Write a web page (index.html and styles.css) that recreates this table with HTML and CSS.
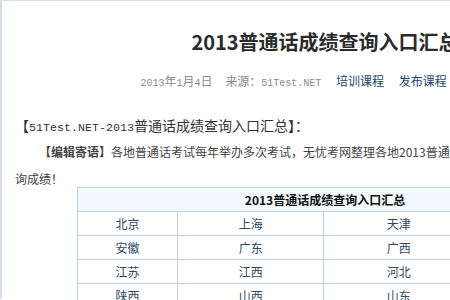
FILE: index.html
```html
<!DOCTYPE html>
<html lang="zh-CN">
<head>
<meta charset="utf-8">
<title>2013普通话成绩查询入口汇总</title>
<link rel="stylesheet" href="styles.css">
</head>
<body>
<div class="page">
  <div class="content">
    <h1 class="title">2013普通话成绩查询入口汇总</h1>
    <div class="meta">
      <span class="date"><span class="en">2013</span>年<span class="en">1</span>月<span class="en">4</span>日</span>
      <span class="source">来源：<span class="en">51Test.NET</span></span>
      <a class="link" href="#">培训课程</a>
      <a class="link" href="#">发布课程</a>
      <a class="link" href="#">在线咨询</a>
    </div>
    <p class="lead">【<span class="en lead-en">51Test.NET-2013</span>普通话成绩查询入口汇总】：</p>
    <p class="intro"><b class="tag">【编辑寄语】</b>各地普通话考试每年举办多次考试，无忧考网整理各地2013普通话成绩查询入口汇总，方便考生查询成绩！</p>
    <table class="grid">
      <colgroup>
        <col class="c1"><col class="c2"><col class="c3"><col class="c4">
      </colgroup>
      <tr><th colspan="4">2013普通话成绩查询入口汇总</th></tr>
      <tr><td>北京</td><td>上海</td><td>天津</td><td>重庆</td></tr>
      <tr><td>安徽</td><td>广东</td><td>广西</td><td>福建</td></tr>
      <tr><td>江苏</td><td>江西</td><td>河北</td><td>河南</td></tr>
      <tr><td>陕西</td><td>山西</td><td>山东</td><td>湖北</td></tr>
    </table>
  </div>
</div>
</body>
</html>
```
FILE: styles.css
```css
html, body {
  margin: 0;
  padding: 0;
  background: #ffffff;
  overflow: hidden;
}
body {
  width: 450px;
  height: 300px;
  font-family: "Noto Sans CJK SC", "Noto Sans", sans-serif;
  color: #333333;
}
.page {
  border-top: 1px solid #d3dfeb;
  border-left: 2px solid #d3dfeb;
  height: 299px;
  box-sizing: border-box;
  width: 700px;
}
.content {
  width: 620px;
  padding-left: 13px;
}
.en {
  font-family: "Liberation Mono", monospace;
  font-size: 10px;
}
.title {
  margin: 26px 0 0 0;
  font-size: 20px;
  line-height: 30px;
  font-weight: bold;
  text-align: center;
  color: #2b2b2b;
}
.meta {
  margin-top: 14px;
  font-size: 12px;
  line-height: 20px;
  text-align: center;
  color: #8c8c8c;
  white-space: nowrap;
}
.meta .source { margin-left: 10px; }
.meta .link {
  color: #19466a;
  text-decoration: none;
  margin-left: 12px;
}
.lead {
  margin: 22px 0 0 0;
  font-size: 14px;
  line-height: 19px;
  color: #333333;
}
.lead-en {
  font-size: 11.67px;
}
.intro {
  margin: 0 0 -5px 0;
  font-size: 12px;
  line-height: 27px;
  text-indent: 2em;
  color: #444444;
}
.tag {
  font-weight: bold;
  color: #444444;
}
.grid {
  margin: 0 auto;
  width: 496px;
  border-collapse: collapse;
  font-size: 12px;
}
.grid .c1 { width: 100px; }
.grid .c2 { width: 147px; }
.grid .c3 { width: 150px; }
.grid .c4 { width: 99px; }
.grid th {
  height: 23px;
  padding: 0;
  background: #f2f9fd;
  color: #111111;
  font-weight: bold;
  border: 1px solid #b9d4e0;
}
.grid td {
  height: 23px;
  padding: 0;
  text-align: center;
  color: #2d4a66;
  border: 1px solid #b9d4e0;
}
```
